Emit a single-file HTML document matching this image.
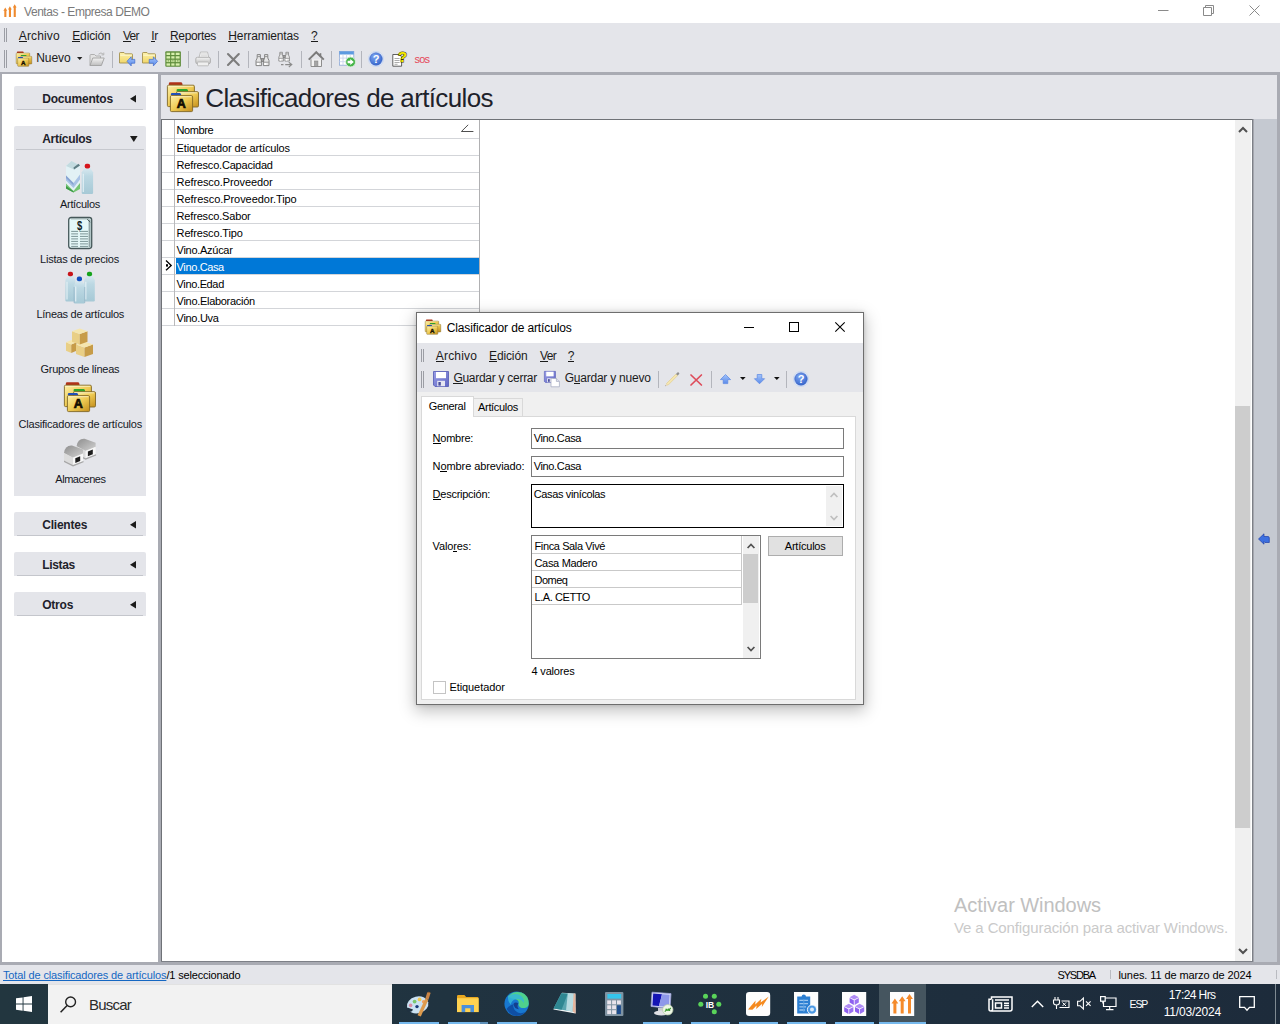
<!DOCTYPE html>
<html lang="es">
<head>
<meta charset="utf-8">
<title>Ventas - Empresa DEMO</title>
<style>
html,body{margin:0;padding:0;}
body{width:1280px;height:1024px;overflow:hidden;position:relative;background:#e4e5ea;font-family:"Liberation Sans",sans-serif;font-size:11px;color:#000;}
.a{position:absolute;}
.x{position:absolute;white-space:nowrap;}
u{text-decoration:underline;text-underline-offset:1px;text-decoration-thickness:1px;}
svg{position:absolute;overflow:visible;}
</style>
</head>
<body>
<svg width="0" height="0" style="left:0;top:0"><defs>
<linearGradient id="gF" x1="0" y1="0" x2="1" y2="1"><stop offset="0" stop-color="#fdf0a8"/><stop offset="0.5" stop-color="#efcb54"/><stop offset="1" stop-color="#c48e1c"/></linearGradient>
<linearGradient id="gY" x1="0" y1="0" x2="0" y2="1"><stop offset="0" stop-color="#fdf2a8"/><stop offset="1" stop-color="#f1d668"/></linearGradient>
<linearGradient id="gB" x1="0" y1="0" x2="0" y2="1"><stop offset="0" stop-color="#a3c4fb"/><stop offset="1" stop-color="#5b8bea"/></linearGradient>
<radialGradient id="gH" cx="0.4" cy="0.3" r="0.8"><stop offset="0" stop-color="#7ea6f2"/><stop offset="1" stop-color="#2f5fc8"/></radialGradient>
<linearGradient id="gS" x1="0" y1="0" x2="1" y2="1"><stop offset="0" stop-color="#9a9fe6"/><stop offset="1" stop-color="#6066c4"/></linearGradient>
<linearGradient id="gG" x1="0" y1="0" x2="0" y2="1"><stop offset="0" stop-color="#f4f4f4"/><stop offset="1" stop-color="#bdbdbd"/></linearGradient>
<linearGradient id="gBx" x1="0" y1="0" x2="1" y2="1"><stop offset="0" stop-color="#f6e7a8"/><stop offset="0.5" stop-color="#e2c06a"/><stop offset="1" stop-color="#bf943c"/></linearGradient>
<linearGradient id="gBt" x1="0" y1="0" x2="0" y2="1"><stop offset="0" stop-color="#dcebf2"/><stop offset="0.35" stop-color="#bcd8e3"/><stop offset="1" stop-color="#a6c9d6"/></linearGradient>
<linearGradient id="gR" x1="0" y1="0" x2="1" y2="1"><stop offset="0" stop-color="#8e8e8e"/><stop offset="1" stop-color="#d2d2d2"/></linearGradient>
</defs></svg>
<div class="a" style="left:0px;top:0px;width:1280px;height:23px;background:#fff;"></div>
<svg style="left:0px;top:0px" width="20" height="20" viewBox="0 0 20 20"><g fill="#ef8a2e"><rect x="4.3" y="10.1" width="2.1" height="6.9"/><path d="M3.4 10.7L5.3 7.5L7.199999999999999 10.7Z"/><rect x="8.9" y="8.8" width="2.1" height="8.2"/><path d="M8.0 9.4L9.9 6.2L11.8 9.4Z"/><rect x="13.7" y="6.9" width="2.1" height="10.1"/><path d="M12.799999999999999 7.5L14.7 4.3L16.599999999999998 7.5Z"/></g></svg>
<div class="x" style="left:24px;top:3.84px;font-size:12px;line-height:16px;color:#7a7a7a;letter-spacing:-0.444px;">Ventas - Empresa DEMO</div>
<svg style="left:1158px;top:10px" width="11" height="2" viewBox="0 0 11 2"><path d="M0 0.5H10.5" stroke="#8a8a8a" stroke-width="1"/></svg>
<svg style="left:1203px;top:5px" width="11" height="11" viewBox="0 0 11 11"><path d="M2.5 2.5V0.5H10.5V8.5H8.5M0.5 2.5H8.5V10.5H0.5Z" fill="none" stroke="#8a8a8a" stroke-width="1"/></svg>
<svg style="left:1249px;top:5px" width="11" height="11" viewBox="0 0 11 11"><path d="M0.5 0.5L10.5 10.5M10.5 0.5L0.5 10.5" fill="none" stroke="#8a8a8a" stroke-width="1"/></svg>
<div class="a" style="left:0px;top:23px;width:1280px;height:49px;background:#e4e5ea;"></div>
<div class="a" style="left:4px;top:28px;width:1px;height:14px;background:#9b9da4;"></div>
<div class="a" style="left:6px;top:28px;width:1px;height:14px;background:#9b9da4;"></div>
<div class="a" style="left:4px;top:50px;width:1px;height:18px;background:#9b9da4;"></div>
<div class="a" style="left:6px;top:50px;width:1px;height:18px;background:#9b9da4;"></div>
<div class="x" style="left:18.75px;top:27.84px;font-size:12px;line-height:16px;color:#1b1b1b;letter-spacing:0.141px;">Archivo</div><div class="a" style="left:18.75px;top:41px;width:8.02px;height:1px;background:#1b1b1b"></div>
<div class="x" style="left:72.25px;top:27.84px;font-size:12px;line-height:16px;color:#1b1b1b;letter-spacing:-0.137px;">Edición</div><div class="a" style="left:72.25px;top:41px;width:8.02px;height:1px;background:#1b1b1b"></div>
<div class="x" style="left:123px;top:27.84px;font-size:12px;line-height:16px;color:#1b1b1b;letter-spacing:-0.755px;">Ver</div><div class="a" style="left:123.00px;top:41px;width:8.02px;height:1px;background:#1b1b1b"></div>
<div class="x" style="left:151.25px;top:27.84px;font-size:12px;line-height:16px;color:#1b1b1b;letter-spacing:-0.297px;">Ir</div><div class="a" style="left:151.25px;top:41px;width:3.34px;height:1px;background:#1b1b1b"></div>
<div class="x" style="left:170px;top:27.84px;font-size:12px;line-height:16px;color:#1b1b1b;letter-spacing:-0.338px;">Reportes</div><div class="a" style="left:170.00px;top:41px;width:8.67px;height:1px;background:#1b1b1b"></div>
<div class="x" style="left:228.3px;top:27.84px;font-size:12px;line-height:16px;color:#1b1b1b;letter-spacing:-0.111px;">Herramientas</div><div class="a" style="left:228.30px;top:41px;width:8.67px;height:1px;background:#1b1b1b"></div>
<div class="x" style="left:311px;top:27.84px;font-size:12px;line-height:16px;color:#1b1b1b;letter-spacing:-1.200px;">?</div><div class="a" style="left:311.00px;top:41px;width:6.69px;height:1px;background:#1b1b1b"></div>
<div class="x" style="left:36.25px;top:49.84px;font-size:12px;line-height:16px;color:#1b1b1b;letter-spacing:-0.058px;">Nuevo</div>
<svg style="left:77px;top:57px" width="6" height="4" viewBox="0 0 6 4"><path d="M0 0H5.4L2.7 3Z" fill="#222"/></svg>
<div class="a" style="left:112px;top:51px;width:1px;height:17px;background:#b3b5bc;"></div>
<div class="a" style="left:188px;top:51px;width:1px;height:17px;background:#b3b5bc;"></div>
<div class="a" style="left:218px;top:51px;width:1px;height:17px;background:#b3b5bc;"></div>
<div class="a" style="left:248px;top:51px;width:1px;height:17px;background:#b3b5bc;"></div>
<div class="a" style="left:301px;top:51px;width:1px;height:17px;background:#b3b5bc;"></div>
<div class="a" style="left:331px;top:51px;width:1px;height:17px;background:#b3b5bc;"></div>
<div class="a" style="left:361px;top:51px;width:1px;height:17px;background:#b3b5bc;"></div>
<svg style="left:16px;top:51px" width="16" height="16" viewBox="0 0 16 16"><g transform="scale(0.5)"><path d="M1.9 4.2V2.2Q1.9 1.2 3.0999999999999996 1.2H14.0Q15.5 1.2 15.5 4.2Z" fill="#b03218"/><rect x="0.4" y="4.2" width="27" height="21.4" rx="1.2" fill="url(#gF)" stroke="#7f6626" stroke-width="0.9"/><path d="M1.4 5.300000000000001H26.2" stroke="#fff9d8" stroke-width="0.8" opacity="0.9"/><path d="M9.6 10.7V9.1Q9.6 8.1 10.799999999999999 8.1H19.7Q21.2 8.1 21.2 10.7Z" fill="#2fa52a"/><rect x="9.5" y="10.7" width="22" height="15.3" rx="1.2" fill="url(#gF)" stroke="#7f6626" stroke-width="0.9"/><path d="M10.5 11.799999999999999H30.3" stroke="#fff9d8" stroke-width="0.8" opacity="0.9"/><path d="M3.9 14.6V12.9Q3.9 11.9 5.1 11.9H12.8Q14.3 11.9 14.3 14.6Z" fill="#1f4fb8"/><rect x="3.4" y="14.6" width="22.2" height="16" rx="1.2" fill="url(#gF)" stroke="#7f6626" stroke-width="0.9"/><path d="M4.4 15.7H24.4" stroke="#fff9d8" stroke-width="0.8" opacity="0.9"/><text x="14.3" y="27" text-anchor="middle" font-family="Liberation Sans, sans-serif" font-weight="bold" font-size="12.5" fill="#120c00" stroke="#120c00" stroke-width="0.7">A</text></g></svg>
<svg style="left:89px;top:51px" width="16" height="16" viewBox="0 0 16 16"><path d="M1 14.5V4.5Q1 3.5 2 3.5H5.5L7 5H11.5V7" fill="#e3e3e3" stroke="#a9a9a9" stroke-width="0.9"/><path d="M1 14.5L3.8 7H15.2L12.4 14.5Z" fill="url(#gG)" stroke="#a0a0a0" stroke-width="0.9"/><path d="M9.5 3.2Q12 0.6 14.3 3.2" fill="none" stroke="#b5b5b5" stroke-width="1"/><path d="M14.8 1.6V3.9H12.5" fill="none" stroke="#b5b5b5" stroke-width="1"/></svg>
<svg style="left:119px;top:51px" width="16" height="16" viewBox="0 0 16 16"><path d="M0.5 12V2.2Q0.5 1.5 1.2 1.5H5L6.3 2.8H12.8Q13.5 2.8 13.5 3.5V12Z" fill="url(#gY)" stroke="#a4914e" stroke-width="0.9"/><path d="M1.2 4.2H12.8" stroke="#fffbe0" stroke-width="0.8"/><path d="M8 10.3L12.2 5.8V8.4H15.8V12.2H12.2V14.9Z" fill="url(#gB)" stroke="#3f6ad0" stroke-width="0.7"/></svg>
<svg style="left:142px;top:51px" width="16" height="16" viewBox="0 0 16 16"><path d="M0.5 12V2.2Q0.5 1.5 1.2 1.5H5L6.3 2.8H12.8Q13.5 2.8 13.5 3.5V12Z" fill="url(#gY)" stroke="#a4914e" stroke-width="0.9"/><path d="M1.2 4.2H12.8" stroke="#fffbe0" stroke-width="0.8"/><path d="M15.6 10.3L11.4 5.8V8.4H7.2V12.2H11.4V14.9Z" fill="url(#gB)" stroke="#3f6ad0" stroke-width="0.7"/></svg>
<svg style="left:165px;top:51px" width="16" height="16" viewBox="0 0 16 16"><rect x="0.3" y="0.3" width="15.6" height="15.4" rx="1" fill="#5f8d3c"/><rect x="1.5" y="1.70" width="3.6" height="2.3" fill="#d7efad"/><rect x="6.3" y="1.70" width="3.2" height="2.3" fill="#d7efad"/><rect x="10.7" y="1.70" width="3.9" height="2.3" fill="#d7efad"/><rect x="1.5" y="5.25" width="3.6" height="2.3" fill="#d7efad"/><rect x="6.3" y="5.25" width="3.2" height="2.3" fill="#d7efad"/><rect x="10.7" y="5.25" width="3.9" height="2.3" fill="#d7efad"/><rect x="1.5" y="8.80" width="3.6" height="2.3" fill="#d7efad"/><rect x="6.3" y="8.80" width="3.2" height="2.3" fill="#d7efad"/><rect x="10.7" y="8.80" width="3.9" height="2.3" fill="#d7efad"/><rect x="1.5" y="12.35" width="3.6" height="2.3" fill="#d7efad"/><rect x="6.3" y="12.35" width="3.2" height="2.3" fill="#d7efad"/><rect x="10.7" y="12.35" width="3.9" height="2.3" fill="#d7efad"/><rect x="2.6" y="9.4" width="1.6" height="1" fill="#5f8d3c"/><rect x="7.2" y="9.4" width="1.4" height="1" fill="#5f8d3c"/><rect x="11.8" y="9.4" width="1.8" height="1" fill="#5f8d3c"/></svg>
<svg style="left:195px;top:51px" width="16" height="16" viewBox="0 0 16 16"><path d="M4 6.5L5.5 1H12.5L13.8 6.5" fill="#f4f4f4" stroke="#b9b9b9" stroke-width="0.9"/><path d="M6 3H12M5.7 4.8H12.4" stroke="#cfcfcf" stroke-width="0.8"/><rect x="0.8" y="6.3" width="14.6" height="6.4" rx="1.6" fill="url(#gG)" stroke="#ababab" stroke-width="0.9"/><rect x="2.5" y="11" width="11" height="3.8" rx="0.8" fill="#efefef" stroke="#b4b4b4" stroke-width="0.8"/></svg>
<svg style="left:227px;top:53px" width="13" height="13" viewBox="0 0 13 13"><path d="M1 1L11.8 12M11.8 1L1 12" stroke="#7d7d7d" stroke-width="2.1" stroke-linecap="round"/></svg>
<svg style="left:255px;top:52.5px" width="15" height="14" viewBox="0 0 15 14"><g fill="#e6e6e6" stroke="#7c7c7c" stroke-width="0.9"><path d="M1 12.6V7.6L2.2 5V1.6H5.4V5L6.6 7.6V12.6Z"/><path d="M8.4 12.6V7.6L9.6 5V1.6H12.8V5L14 7.6V12.6Z"/><rect x="6.3" y="5.6" width="2.4" height="2.8" fill="#a5a5a5"/></g><path d="M1.2 9.2H6.4M8.6 9.2H13.8M2.3 3.6H5.3M9.7 3.6H12.7" stroke="#8d8d8d" stroke-width="0.9"/><rect x="2" y="10" width="2" height="2" fill="#fff"/><rect x="9.4" y="10" width="2" height="2" fill="#fff"/></svg>
<svg style="left:278px;top:50.5px" width="15" height="16" viewBox="0 0 15 16"><g transform="scale(0.82,0.8)"><g fill="#e6e6e6" stroke="#7c7c7c" stroke-width="0.9"><path d="M1 12.6V7.6L2.2 5V1.6H5.4V5L6.6 7.6V12.6Z"/><path d="M8.4 12.6V7.6L9.6 5V1.6H12.8V5L14 7.6V12.6Z"/><rect x="6.3" y="5.6" width="2.4" height="2.8" fill="#a5a5a5"/></g><path d="M1.2 9.2H6.4M8.6 9.2H13.8M2.3 3.6H5.3M9.7 3.6H12.7" stroke="#8d8d8d" stroke-width="0.9"/><rect x="2" y="10" width="2" height="2" fill="#fff"/><rect x="9.4" y="10" width="2" height="2" fill="#fff"/></g><path d="M3 13.6H5.5M7.2 13.6H13.4M10.8 11.2L13.8 13.6L10.8 16" fill="none" stroke="#8b8b8b" stroke-width="1.1"/></svg>
<svg style="left:308px;top:50.5px" width="16.5" height="16.5" viewBox="0 0 16.5 16.5"><path d="M3 8.3V15.5H13.5V8.3" fill="#f1f1f1" stroke="#8d8d8d" stroke-width="1"/><rect x="6.6" y="10" width="3.3" height="5.4" fill="#a5a5a5" stroke="#858585" stroke-width="0.6"/><path d="M0.7 8.6L8.25 1.2L15.8 8.6" fill="none" stroke="#7b7b7b" stroke-width="2"/><rect x="11.6" y="2.2" width="1.7" height="3.4" fill="#7b7b7b"/></svg>
<svg style="left:338.5px;top:51px" width="17" height="16" viewBox="0 0 17 16"><rect x="0.4" y="0.4" width="14.4" height="13.8" fill="#fff" stroke="#8aa7d6" stroke-width="0.8"/><rect x="0.4" y="0.4" width="14.4" height="3.1" fill="#5d9be0"/><path d="M4.0 3.5V14.2" stroke="#c6d2ea" stroke-width="0.8"/><path d="M7.6000000000000005 3.5V14.2" stroke="#c6d2ea" stroke-width="0.8"/><path d="M11.200000000000001 3.5V14.2" stroke="#c6d2ea" stroke-width="0.8"/><path d="M0.4 7.1H14.8" stroke="#c6d2ea" stroke-width="0.8"/><path d="M0.4 10.7H14.8" stroke="#c6d2ea" stroke-width="0.8"/><circle cx="11.6" cy="11" r="4.9" fill="#46b44a" stroke="#dff3df" stroke-width="0.8"/><path d="M8.6 9.8H11.3V7.9L14.8 11L11.3 14.1V12.2H8.6Z" fill="#fff"/></svg>
<svg style="left:368px;top:51px" width="16" height="16" viewBox="0 0 16 16"><circle cx="8" cy="8" r="7.6" fill="#e9f1fd" stroke="#b9cdf0" stroke-width="0.6"/><circle cx="8" cy="8" r="6.3" fill="url(#gH)" stroke="#3a62c0" stroke-width="0.6"/><text x="8" y="12" text-anchor="middle" font-family="Liberation Sans, sans-serif" font-weight="bold" font-size="11" fill="#fff">?</text></svg>
<svg style="left:392px;top:50px" width="16" height="17" viewBox="0 0 16 17"><path d="M0.8 4.5H7.2L9.6 6.8V16.2H0.8Z" fill="#fff" stroke="#4e4e4e" stroke-width="0.9"/><path d="M2.5 8.5H7.6M2.5 10.5H7.6M2.5 12.5H7.6M2.5 14.3H5.6" stroke="#8a8a8a" stroke-width="0.7"/><text x="10.6" y="12.3" text-anchor="middle" font-family="Liberation Sans, sans-serif" font-weight="bold" font-size="15" fill="#f4ea00" stroke="#3f3a00" stroke-width="1.1" paint-order="stroke">?</text></svg>
<div class="x" style="left:414.6px;top:51.79px;font-size:11px;line-height:14px;color:#e4485a;letter-spacing:-0.842px;">sos</div>
<div class="a" style="left:0px;top:72px;width:1280px;height:3px;background:#a9abb3;"></div>
<div class="a" style="left:0px;top:75px;width:2px;height:890px;background:#a9abb3;"></div>
<div class="a" style="left:2px;top:74px;width:156px;height:888px;background:#fff;"></div>
<div class="a" style="left:158px;top:75px;width:3px;height:890px;background:#a9abb3;"></div>
<div class="a" style="left:14px;top:86px;width:132px;height:24px;background:#e4e5ea;border-radius:2px 2px 0 0;"></div>
<div class="a" style="left:17px;top:109px;width:126px;height:1px;background:#c4c6cc;"></div>
<div class="x" style="left:42.2px;top:90.84px;font-size:12px;line-height:16px;color:#1e222b;font-weight:700;letter-spacing:-0.189px;">Documentos</div>
<svg style="left:130px;top:95px" width="6" height="8" viewBox="0 0 6 8"><path d="M6 0V7.6L0 3.8Z" fill="#1b1b1b"/></svg>
<div class="a" style="left:14px;top:126px;width:132px;height:370px;background:#e4e5ea;border-radius:2px 2px 0 0;"></div>
<div class="a" style="left:16px;top:149px;width:128px;height:1px;background:#c6c8ce;"></div>
<div class="x" style="left:42.2px;top:130.84px;font-size:12px;line-height:16px;color:#1e222b;font-weight:700;letter-spacing:-0.280px;">Artículos</div>
<svg style="left:130px;top:136px" width="8" height="6" viewBox="0 0 8 6"><path d="M0 0H7.6L3.8 6Z" fill="#1b1b1b"/></svg>
<div class="a" style="left:14px;top:512px;width:132px;height:24px;background:#e4e5ea;border-radius:2px 2px 0 0;"></div>
<div class="a" style="left:17px;top:535px;width:126px;height:1px;background:#c4c6cc;"></div>
<div class="x" style="left:42.2px;top:516.84px;font-size:12px;line-height:16px;color:#1e222b;font-weight:700;letter-spacing:-0.211px;">Clientes</div>
<svg style="left:130px;top:521px" width="6" height="8" viewBox="0 0 6 8"><path d="M6 0V7.6L0 3.8Z" fill="#1b1b1b"/></svg>
<div class="a" style="left:14px;top:552px;width:132px;height:24px;background:#e4e5ea;border-radius:2px 2px 0 0;"></div>
<div class="a" style="left:17px;top:575px;width:126px;height:1px;background:#c4c6cc;"></div>
<div class="x" style="left:42.2px;top:556.84px;font-size:12px;line-height:16px;color:#1e222b;font-weight:700;letter-spacing:-0.315px;">Listas</div>
<svg style="left:130px;top:561px" width="6" height="8" viewBox="0 0 6 8"><path d="M6 0V7.6L0 3.8Z" fill="#1b1b1b"/></svg>
<div class="a" style="left:14px;top:592px;width:132px;height:24px;background:#e4e5ea;border-radius:2px 2px 0 0;"></div>
<div class="a" style="left:17px;top:615px;width:126px;height:1px;background:#c4c6cc;"></div>
<div class="x" style="left:42.2px;top:596.84px;font-size:12px;line-height:16px;color:#1e222b;font-weight:700;letter-spacing:-0.223px;">Otros</div>
<svg style="left:130px;top:601px" width="6" height="8" viewBox="0 0 6 8"><path d="M6 0V7.6L0 3.8Z" fill="#1b1b1b"/></svg>
<div class="x" style="left:60px;top:197.19px;font-size:11px;line-height:14px;color:#15181f;letter-spacing:-0.311px;">Artículos</div>
<div class="x" style="left:40px;top:252.19px;font-size:11px;line-height:14px;color:#15181f;letter-spacing:-0.209px;">Listas de precios</div>
<div class="x" style="left:36.5px;top:307.19px;font-size:11px;line-height:14px;color:#15181f;letter-spacing:-0.287px;">Líneas de artículos</div>
<div class="x" style="left:40.6px;top:362.19px;font-size:11px;line-height:14px;color:#15181f;letter-spacing:-0.330px;">Grupos de líneas</div>
<div class="x" style="left:18.5px;top:417.19px;font-size:11px;line-height:14px;color:#15181f;letter-spacing:-0.201px;">Clasificadores de artículos</div>
<div class="x" style="left:55.3px;top:472.19px;font-size:11px;line-height:14px;color:#15181f;letter-spacing:-0.469px;">Almacenes</div>
<svg style="left:64px;top:160px" width="32" height="36" viewBox="0 0 32 36"><path d="M2 6L7.5 1L16 5.5V29L9.5 32L2 28Z" fill="#e2f1f5"/><path d="M2 6L7.5 1L16 5.5L10 9.5Z" fill="#c3dbe0"/><path d="M10 9.5L16 5.5L14.5 3.8L9.5 7.5Z" fill="#5e7d84"/><path d="M2 15.5L9.5 23L16 14.5V19.5L9.5 28L2 20.5Z" fill="#a9c3e6"/><path d="M2 15.5L9.5 23V25.5L2 18Z" fill="#6a86c0" opacity="0.55"/><path d="M2 23.5L9.5 31L16 23V29L9.5 32.5L2 28.5Z" fill="#74c472"/><path d="M2 26L9.5 31.2V32.5L2 28.5Z" fill="#3c9a48"/><path d="M21.5 6.6L17.7 12.200000000000001V32.8Q17.7 34 18.9 34H27.9Q29.099999999999998 34 29.099999999999998 32.8V12.200000000000001L25.299999999999997 6.6Z" fill="url(#gBt)" opacity="1"/><path d="M19.3 13.8V32" stroke="#e9f4f8" stroke-width="1.3" opacity="0.8"/><rect x="20.7" y="3.6999999999999997" width="5.4" height="4.800000000000001" rx="2" fill="#d6141c"/></svg>
<svg style="left:64px;top:216px" width="32" height="34" viewBox="0 0 32 34"><rect x="4.7" y="1.5" width="23" height="31" rx="2.4" fill="#e4f7f7" stroke="#46585a" stroke-width="1.3"/><path d="M25.6 3.5V31" stroke="#8fa3a4" stroke-width="2"/><path d="M7 2.7H25" stroke="#9fb1b2" stroke-width="1.4"/><path d="M23.3 3.2L26.2 6.2" stroke="#46585a" stroke-width="1"/><path d="M7.2 15.4H14M16 15.4H24" stroke="#7d9596" stroke-width="1"/><path d="M7.2 17.9H14M16 17.9H24" stroke="#7d9596" stroke-width="1"/><path d="M7.2 20.4H14M16 20.4H24" stroke="#7d9596" stroke-width="1"/><path d="M7.2 22.9H14M16 22.9H24" stroke="#7d9596" stroke-width="1"/><path d="M7.2 25.4H14M16 25.4H24" stroke="#7d9596" stroke-width="1"/><path d="M7.2 27.9H14M16 27.9H24" stroke="#7d9596" stroke-width="1"/><path d="M7.2 30.4H14M16 30.4H24" stroke="#7d9596" stroke-width="1"/><text transform="translate(15.6 13.6) scale(0.82 1.05)" text-anchor="middle" font-family="Liberation Sans, sans-serif" font-weight="bold" font-size="11.5" fill="#0d1a1a">$</text></svg>
<svg style="left:64px;top:270px" width="32" height="36" viewBox="0 0 32 36"><path d="M4.5 4.5L1.4000000000000004 10.1V30.3Q1.4000000000000004 31.5 2.6000000000000005 31.5H10.200000000000001Q11.4 31.5 11.4 30.3V10.1L8.3 4.5Z" fill="url(#gBt)" opacity="1"/><path d="M3.0000000000000004 11.7V29.5" stroke="#e9f4f8" stroke-width="1.3" opacity="0.8"/><rect x="3.8000000000000003" y="1.7" width="5.2" height="4.6000000000000005" rx="2" fill="#c8141a"/><path d="M23.6 4.5L20.2 10.1V30.3Q20.2 31.5 21.4 31.5H29.6Q30.8 31.5 30.8 30.3V10.1L27.4 4.5Z" fill="url(#gBt)" opacity="1"/><path d="M21.8 11.7V29.5" stroke="#e9f4f8" stroke-width="1.3" opacity="0.8"/><rect x="22.9" y="1.7" width="5.2" height="4.6000000000000005" rx="2" fill="#16a31c"/><path d="M13.5 9.4L10.100000000000001 15.000000000000002V32.4Q10.100000000000001 33.6 11.3 33.6H19.5Q20.7 33.6 20.7 32.4V15.000000000000002L17.3 9.4Z" fill="url(#gBt)" opacity="1"/><path d="M11.700000000000001 16.6V31.6" stroke="#e9f4f8" stroke-width="1.3" opacity="0.8"/><rect x="12.8" y="6.6" width="5.2" height="4.6000000000000005" rx="2" fill="#1450c0"/><path d="M10.1 33V17M20.7 33V17" stroke="#8fb0c4" stroke-width="0.8" opacity="0.8"/></svg>
<svg style="left:64px;top:326px" width="32" height="32" viewBox="0 0 32 32"><path d="M2 16.2L7.25 18.4V27L2 24.8Z" fill="#e9cf86"/><path d="M7.25 18.4L12.5 16.2V24.8L7.25 27Z" fill="#c79c48"/><path d="M2 16.2L7.25 14L12.5 16.2L7.25 18.4Z" fill="#f5e6ae"/><path d="M12 18.5L20.5 21.5V31.0L12 28.0Z" fill="#e9cf86"/><path d="M20.5 21.5L29 18.5V28.0L20.5 31.0Z" fill="#c79c48"/><path d="M12 18.5L20.5 15.5L29 18.5L20.5 21.5Z" fill="#f5e6ae"/><path d="M8 5.3L15.75 8.1V18.5L8 15.7Z" fill="#e9cf86"/><path d="M15.75 8.1L23.5 5.3V15.7L15.75 18.5Z" fill="#c79c48"/><path d="M8 5.3L15.75 2.5L23.5 5.3L15.75 8.1Z" fill="#f5e6ae"/></svg>
<svg style="left:64px;top:381px" width="32" height="32" viewBox="0 0 32 32"><g transform="scale(1.0)"><path d="M1.9 4.2V2.2Q1.9 1.2 3.0999999999999996 1.2H14.0Q15.5 1.2 15.5 4.2Z" fill="#b03218"/><rect x="0.4" y="4.2" width="27" height="21.4" rx="1.2" fill="url(#gF)" stroke="#7f6626" stroke-width="0.9"/><path d="M1.4 5.300000000000001H26.2" stroke="#fff9d8" stroke-width="0.8" opacity="0.9"/><path d="M9.6 10.7V9.1Q9.6 8.1 10.799999999999999 8.1H19.7Q21.2 8.1 21.2 10.7Z" fill="#2fa52a"/><rect x="9.5" y="10.7" width="22" height="15.3" rx="1.2" fill="url(#gF)" stroke="#7f6626" stroke-width="0.9"/><path d="M10.5 11.799999999999999H30.3" stroke="#fff9d8" stroke-width="0.8" opacity="0.9"/><path d="M3.9 14.6V12.9Q3.9 11.9 5.1 11.9H12.8Q14.3 11.9 14.3 14.6Z" fill="#1f4fb8"/><rect x="3.4" y="14.6" width="22.2" height="16" rx="1.2" fill="url(#gF)" stroke="#7f6626" stroke-width="0.9"/><path d="M4.4 15.7H24.4" stroke="#fff9d8" stroke-width="0.8" opacity="0.9"/><text x="14.3" y="27" text-anchor="middle" font-family="Liberation Sans, sans-serif" font-weight="bold" font-size="12.5" fill="#120c00" stroke="#120c00" stroke-width="0.7">A</text></g></svg>
<svg style="left:64px;top:436px" width="32" height="32" viewBox="0 0 32 32"><path d="M12.6 10.2Q13.6 2.2 20.6 2.7L31.6 6.7V11.2L21.6 15.2Z" fill="url(#gR)"/><path d="M12.6 10.2L21.6 14.7V22.2L12.6 17.7Z" fill="#dcdcdc"/><path d="M21.6 14.7L31.6 10.7V18.2L21.6 22.2Z" fill="#f7f7f7"/><path d="M23.9 15.399999999999999L28.799999999999997 13.5V18.2L23.9 20.2Z" fill="#1d1d1d"/><path d="M12.6 17.7L21.6 22.2L32.1 18.2V19.5L21.6 23.7L12.6 19.2Z" fill="#a7a7a7"/><path d="M0 17Q1 9 8 9.5L19 13.5V18L9 22Z" fill="url(#gR)"/><path d="M0 17L9 21.5V29L0 24.5Z" fill="#dcdcdc"/><path d="M9 21.5L19 17.5V25L9 29Z" fill="#f7f7f7"/><path d="M11.3 22.2L16.2 20.3V25L11.3 27Z" fill="#1d1d1d"/><path d="M0 24.5L9 29L19.5 25V26.3L9 30.5L0 26Z" fill="#a7a7a7"/></svg>
<div class="a" style="left:161px;top:75px;width:1116px;height:44px;background:#e4e5ea;"></div>
<svg style="left:167px;top:81px" width="32" height="32" viewBox="0 0 32 32"><g transform="scale(1.0)"><path d="M1.9 4.2V2.2Q1.9 1.2 3.0999999999999996 1.2H14.0Q15.5 1.2 15.5 4.2Z" fill="#b03218"/><rect x="0.4" y="4.2" width="27" height="21.4" rx="1.2" fill="url(#gF)" stroke="#7f6626" stroke-width="0.9"/><path d="M1.4 5.300000000000001H26.2" stroke="#fff9d8" stroke-width="0.8" opacity="0.9"/><path d="M9.6 10.7V9.1Q9.6 8.1 10.799999999999999 8.1H19.7Q21.2 8.1 21.2 10.7Z" fill="#2fa52a"/><rect x="9.5" y="10.7" width="22" height="15.3" rx="1.2" fill="url(#gF)" stroke="#7f6626" stroke-width="0.9"/><path d="M10.5 11.799999999999999H30.3" stroke="#fff9d8" stroke-width="0.8" opacity="0.9"/><path d="M3.9 14.6V12.9Q3.9 11.9 5.1 11.9H12.8Q14.3 11.9 14.3 14.6Z" fill="#1f4fb8"/><rect x="3.4" y="14.6" width="22.2" height="16" rx="1.2" fill="url(#gF)" stroke="#7f6626" stroke-width="0.9"/><path d="M4.4 15.7H24.4" stroke="#fff9d8" stroke-width="0.8" opacity="0.9"/><text x="14.3" y="27" text-anchor="middle" font-family="Liberation Sans, sans-serif" font-weight="bold" font-size="12.5" fill="#120c00" stroke="#120c00" stroke-width="0.7">A</text></g></svg>
<div class="x" style="left:205.3px;top:81.49px;font-size:26px;line-height:34px;color:#1e222b;letter-spacing:-0.645px;">Clasificadores de artículos</div>
<div class="a" style="left:161px;top:119px;width:1092px;height:843px;background:#fff;"></div>
<div class="a" style="left:161px;top:119px;width:1092px;height:1px;background:#6f7277;"></div>
<div class="a" style="left:161px;top:119px;width:1px;height:843px;background:#6f7277;"></div>
<div class="a" style="left:162px;top:138px;width:318px;height:1px;background:#d3d5d9;"></div>
<div class="x" style="left:176.6px;top:123.19px;font-size:11px;line-height:14px;color:#000;letter-spacing:-0.421px;">Nombre</div>
<div class="a" style="left:162px;top:155px;width:318px;height:1px;background:#d3d5d9;"></div>
<div class="x" style="left:176.6px;top:140.69px;font-size:11px;line-height:14px;color:#000;letter-spacing:-0.116px;">Etiquetador de artículos</div>
<div class="a" style="left:162px;top:172px;width:318px;height:1px;background:#d3d5d9;"></div>
<div class="x" style="left:176.6px;top:157.69px;font-size:11px;line-height:14px;color:#000;letter-spacing:-0.193px;">Refresco.Capacidad</div>
<div class="a" style="left:162px;top:189px;width:318px;height:1px;background:#d3d5d9;"></div>
<div class="x" style="left:176.6px;top:174.69px;font-size:11px;line-height:14px;color:#000;letter-spacing:-0.107px;">Refresco.Proveedor</div>
<div class="a" style="left:162px;top:206px;width:318px;height:1px;background:#d3d5d9;"></div>
<div class="x" style="left:176.6px;top:191.69px;font-size:11px;line-height:14px;color:#000;letter-spacing:-0.051px;">Refresco.Proveedor.Tipo</div>
<div class="a" style="left:162px;top:223px;width:318px;height:1px;background:#d3d5d9;"></div>
<div class="x" style="left:176.6px;top:208.69px;font-size:11px;line-height:14px;color:#000;letter-spacing:-0.174px;">Refresco.Sabor</div>
<div class="a" style="left:162px;top:240px;width:318px;height:1px;background:#d3d5d9;"></div>
<div class="x" style="left:176.6px;top:225.69px;font-size:11px;line-height:14px;color:#000;letter-spacing:-0.151px;">Refresco.Tipo</div>
<div class="a" style="left:162px;top:257px;width:318px;height:1px;background:#d3d5d9;"></div>
<div class="x" style="left:176.6px;top:242.69px;font-size:11px;line-height:14px;color:#000;letter-spacing:-0.283px;">Vino.Azúcar</div>
<div class="a" style="left:162px;top:274px;width:318px;height:1px;background:#d3d5d9;"></div>
<div class="a" style="left:176px;top:258px;width:303px;height:16px;background:#0078d7;"></div>
<div class="x" style="left:176.6px;top:259.69px;font-size:11px;line-height:14px;color:#fff;letter-spacing:-0.363px;">Vino.Casa</div>
<div class="a" style="left:162px;top:291px;width:318px;height:1px;background:#d3d5d9;"></div>
<div class="x" style="left:176.6px;top:276.69px;font-size:11px;line-height:14px;color:#000;letter-spacing:-0.364px;">Vino.Edad</div>
<div class="a" style="left:162px;top:308px;width:318px;height:1px;background:#d3d5d9;"></div>
<div class="x" style="left:176.6px;top:293.69px;font-size:11px;line-height:14px;color:#000;letter-spacing:-0.298px;">Vino.Elaboración</div>
<div class="a" style="left:162px;top:325px;width:318px;height:1px;background:#d3d5d9;"></div>
<div class="x" style="left:176.6px;top:310.69px;font-size:11px;line-height:14px;color:#000;letter-spacing:-0.317px;">Vino.Uva</div>
<div class="a" style="left:174px;top:120px;width:1px;height:206px;background:#b9b9bb;"></div>
<div class="a" style="left:479px;top:120px;width:1px;height:206px;background:#b0b0b2;"></div>
<svg style="left:460px;top:124px" width="14" height="8" viewBox="0 0 14 8"><path d="M8.2 0.8L1.4 7.5H13.4" fill="none" stroke="#4f4f4f" stroke-width="1"/></svg>
<svg style="left:165px;top:260px" width="8" height="11" viewBox="0 0 8 11"><path d="M1 0.6L6.2 5.4L1 10.2" fill="none" stroke="#000" stroke-width="1.3"/><rect x="1" y="4.2" width="2" height="2.4" fill="#000"/></svg>
<div class="a" style="left:1235px;top:120px;width:16px;height:841px;background:#f0f0f0;"></div>
<div class="a" style="left:1235px;top:406px;width:15px;height:422px;background:#cdcdcd;"></div>
<svg style="left:1238px;top:126px" width="10" height="7" viewBox="0 0 10 7"><path d="M1 6L5 2L9 6" fill="none" stroke="#505050" stroke-width="2"/></svg>
<svg style="left:1238px;top:948px" width="10" height="7" viewBox="0 0 10 7"><path d="M1 1L5 5L9 1" fill="none" stroke="#505050" stroke-width="2"/></svg>
<div class="a" style="left:1252px;top:119px;width:1px;height:843px;background:#7d8087;"></div>
<div class="a" style="left:161px;top:961px;width:1092px;height:1px;background:#7d8087;"></div>
<div class="a" style="left:1253px;top:119px;width:24px;height:843px;background:#c5c9d1;"></div>
<div class="a" style="left:1253px;top:119px;width:1px;height:843px;background:#a4a6ae;"></div>
<div class="a" style="left:1277px;top:75px;width:3px;height:890px;background:#a9abb3;"></div>
<div class="a" style="left:0px;top:962px;width:1280px;height:3px;background:#a9abb3;"></div>
<svg style="left:1258px;top:533px" width="12" height="12" viewBox="0 0 12 12"><path d="M0.5 6L6 0.8V3.5H10Q11.3 3.5 11.3 5V9.5H7L6 8.5V11.2Z" fill="#3c6fe0" stroke="#1f3fa8" stroke-width="0.7"/></svg>
<div class="x" style="left:954px;top:892.07px;font-size:20px;line-height:26px;color:#c0c0c0;letter-spacing:-0.054px;">Activar Windows</div>
<div class="x" style="left:954px;top:917.80px;font-size:15px;line-height:20px;color:#cacaca;letter-spacing:-0.112px;">Ve a Configuración para activar Windows.</div>
<div class="a" style="left:416px;top:312px;width:448px;height:393px;background:#f0f0f0;box-shadow:0 5px 15px 1px rgba(0,0,0,0.25),0 0 4px rgba(0,0,0,0.16);"></div>
<div class="a" style="left:416px;top:312px;width:448px;height:393px;border:1px solid #6e6e6e;box-sizing:border-box;"></div>
<div class="a" style="left:417px;top:313px;width:446px;height:30px;background:#fff;"></div>
<div class="a" style="left:417px;top:343px;width:446px;height:49px;background:#e4e5ea;"></div>
<svg style="left:425px;top:319px" width="16" height="16" viewBox="0 0 16 16"><g transform="scale(0.5)"><path d="M1.9 4.2V2.2Q1.9 1.2 3.0999999999999996 1.2H14.0Q15.5 1.2 15.5 4.2Z" fill="#b03218"/><rect x="0.4" y="4.2" width="27" height="21.4" rx="1.2" fill="url(#gF)" stroke="#7f6626" stroke-width="0.9"/><path d="M1.4 5.300000000000001H26.2" stroke="#fff9d8" stroke-width="0.8" opacity="0.9"/><path d="M9.6 10.7V9.1Q9.6 8.1 10.799999999999999 8.1H19.7Q21.2 8.1 21.2 10.7Z" fill="#2fa52a"/><rect x="9.5" y="10.7" width="22" height="15.3" rx="1.2" fill="url(#gF)" stroke="#7f6626" stroke-width="0.9"/><path d="M10.5 11.799999999999999H30.3" stroke="#fff9d8" stroke-width="0.8" opacity="0.9"/><path d="M3.9 14.6V12.9Q3.9 11.9 5.1 11.9H12.8Q14.3 11.9 14.3 14.6Z" fill="#1f4fb8"/><rect x="3.4" y="14.6" width="22.2" height="16" rx="1.2" fill="url(#gF)" stroke="#7f6626" stroke-width="0.9"/><path d="M4.4 15.7H24.4" stroke="#fff9d8" stroke-width="0.8" opacity="0.9"/><text x="14.3" y="27" text-anchor="middle" font-family="Liberation Sans, sans-serif" font-weight="bold" font-size="12.5" fill="#120c00" stroke="#120c00" stroke-width="0.7">A</text></g></svg>
<div class="x" style="left:446.7px;top:319.84px;font-size:12px;line-height:16px;color:#000;letter-spacing:-0.122px;">Clasificador de artículos</div>
<svg style="left:744px;top:327px" width="10" height="1" viewBox="0 0 10 1"><rect x="0" y="0" width="10" height="1" fill="#000"/></svg>
<svg style="left:789px;top:322px" width="10" height="10" viewBox="0 0 10 10"><rect x="0.5" y="0.5" width="9" height="9" fill="none" stroke="#000" stroke-width="1"/></svg>
<svg style="left:835px;top:322px" width="10" height="10" viewBox="0 0 10 10"><path d="M0.3 0.3L9.7 9.7M9.7 0.3L0.3 9.7" fill="none" stroke="#000" stroke-width="1.1"/></svg>
<div class="a" style="left:421px;top:349px;width:1px;height:13px;background:#9b9da4;"></div>
<div class="a" style="left:423px;top:349px;width:1px;height:13px;background:#9b9da4;"></div>
<div class="a" style="left:421px;top:371px;width:1px;height:17px;background:#9b9da4;"></div>
<div class="a" style="left:423px;top:371px;width:1px;height:17px;background:#9b9da4;"></div>
<div class="x" style="left:435.8px;top:347.84px;font-size:12px;line-height:16px;color:#1b1b1b;letter-spacing:0.169px;">Archivo</div><div class="a" style="left:435.80px;top:361px;width:8.02px;height:1px;background:#1b1b1b"></div>
<div class="x" style="left:489px;top:347.84px;font-size:12px;line-height:16px;color:#1b1b1b;letter-spacing:-0.123px;">Edición</div><div class="a" style="left:489.00px;top:361px;width:8.02px;height:1px;background:#1b1b1b"></div>
<div class="x" style="left:540px;top:347.84px;font-size:12px;line-height:16px;color:#1b1b1b;letter-spacing:-0.672px;">Ver</div><div class="a" style="left:540.00px;top:361px;width:8.02px;height:1px;background:#1b1b1b"></div>
<div class="x" style="left:567.8px;top:347.84px;font-size:12px;line-height:16px;color:#1b1b1b;letter-spacing:-1.200px;">?</div><div class="a" style="left:567.80px;top:361px;width:6.69px;height:1px;background:#1b1b1b"></div>
<div class="x" style="left:453.4px;top:370.04px;font-size:12px;line-height:16px;color:#1b1b1b;letter-spacing:-0.277px;">Guardar y cerrar</div><div class="a" style="left:453.40px;top:383px;width:9.34px;height:1px;background:#1b1b1b"></div>
<div class="x" style="left:564.7px;top:370.04px;font-size:12px;line-height:16px;color:#1b1b1b;letter-spacing:-0.226px;">Guardar y nuevo</div><div class="a" style="left:573.82px;top:383px;width:6.67px;height:1px;background:#1b1b1b"></div>
<div class="a" style="left:658px;top:371px;width:1px;height:17px;background:#b3b5bc;"></div>
<div class="a" style="left:711px;top:371px;width:1px;height:17px;background:#b3b5bc;"></div>
<div class="a" style="left:786px;top:371px;width:1px;height:17px;background:#b3b5bc;"></div>
<svg style="left:433px;top:371px" width="16" height="16" viewBox="0 0 16 16"><g transform="scale(1)"><path d="M0.5 0.5H15.5V15.5H2L0.5 14Z" fill="url(#gS)" stroke="#5258b4" stroke-width="0.8"/><rect x="3" y="1" width="10" height="6.2" fill="#fff"/><rect x="4.2" y="9.8" width="7.8" height="5.4" fill="#e6e6f2"/><rect x="5.4" y="11" width="2.4" height="3.6" fill="#4a4f9c"/></g></svg>
<svg style="left:544px;top:371px" width="16" height="16" viewBox="0 0 16 16"><g transform="scale(0.74)"><path d="M0.5 0.5H15.5V15.5H2L0.5 14Z" fill="url(#gS)" stroke="#5258b4" stroke-width="0.8"/><rect x="3" y="1" width="10" height="6.2" fill="#fff"/><rect x="4.2" y="9.8" width="7.8" height="5.4" fill="#e6e6f2"/><rect x="5.4" y="11" width="2.4" height="3.6" fill="#4a4f9c"/></g><path d="M7 7.4H12.4L15.4 10.4V15.8H7Z" fill="#fff" stroke="#a9aec4" stroke-width="0.8"/><path d="M12.4 7.4V10.4H15.4" fill="#e4e6f0" stroke="#a9aec4" stroke-width="0.8"/></svg>
<svg style="left:664px;top:371px" width="17" height="16" viewBox="0 0 17 16"><path d="M2.4 12.6L12 3L13.6 4.6L4 14.2Z" fill="#f4e6b0" stroke="#e0c98a" stroke-width="0.6"/><path d="M12 3L13.4 1.6Q14 1 14.7 1.6L15.1 2Q15.7 2.7 15 3.3L13.6 4.6Z" fill="#8f8f8f"/><path d="M2.4 12.6L1.2 15.2L4 14.2Z" fill="#ecdcb8"/><path d="M1.2 15.2L1.6 14.2L2.3 14.8Z" fill="#777"/></svg>
<svg style="left:690px;top:373.5px" width="13" height="12" viewBox="0 0 13 12"><path d="M1 1L11.4 11M11.4 1L1 11" stroke="#de4c5b" stroke-width="1.7" stroke-linecap="round"/></svg>
<svg style="left:720px;top:373.5px" width="11" height="10" viewBox="0 0 11 10"><path d="M5.5 0.5L10.6 5.6H7.8V9.6H3.2V5.6H0.4Z" fill="url(#gB)" stroke="#5a86e2" stroke-width="0.7"/></svg>
<svg style="left:740px;top:377px" width="6" height="3" viewBox="0 0 6 3"><path d="M0 0H5.6L2.8 3Z" fill="#111"/></svg>
<svg style="left:754px;top:373.5px" width="11" height="10" viewBox="0 0 11 10"><path d="M5.5 9.8L10.6 4.7H7.8V0.5H3.2V4.7H0.4Z" fill="url(#gB)" stroke="#5a86e2" stroke-width="0.7"/></svg>
<svg style="left:773.6px;top:377px" width="6" height="3" viewBox="0 0 6 3"><path d="M0 0H5.6L2.8 3Z" fill="#111"/></svg>
<svg style="left:793px;top:371px" width="16" height="16" viewBox="0 0 16 16"><circle cx="8" cy="8" r="7.6" fill="#e9f1fd" stroke="#b9cdf0" stroke-width="0.6"/><circle cx="8" cy="8" r="6.3" fill="url(#gH)" stroke="#3a62c0" stroke-width="0.6"/><text x="8" y="12" text-anchor="middle" font-family="Liberation Sans, sans-serif" font-weight="bold" font-size="11" fill="#fff">?</text></svg>
<div class="a" style="left:421px;top:416px;width:435px;height:284px;background:#fff;border:1px solid #d9d9d9;box-sizing:border-box;"></div>
<div class="a" style="left:473px;top:398px;width:50px;height:19px;background:#f0f0f0;border:1px solid #d9d9d9;box-sizing:border-box;"></div>
<div class="a" style="left:421px;top:396px;width:53px;height:21px;background:#fff;border:1px solid #d9d9d9;border-bottom:0;box-sizing:border-box;"></div>
<div class="x" style="left:428.75px;top:398.59px;font-size:11px;line-height:14px;color:#000;letter-spacing:-0.342px;">General</div>
<div class="x" style="left:478px;top:400.44px;font-size:11px;line-height:14px;color:#000;letter-spacing:-0.311px;">Artículos</div>
<div class="x" style="left:432.6px;top:430.69px;font-size:11px;line-height:14px;color:#000;letter-spacing:-0.241px;">Nombre:</div><div class="a" style="left:432.60px;top:443px;width:7.95px;height:1px;background:#000"></div>
<div class="x" style="left:432.6px;top:458.89px;font-size:11px;line-height:14px;color:#000;letter-spacing:-0.092px;">Nombre abreviado:</div><div class="a" style="left:440.46px;top:471px;width:6.11px;height:1px;background:#000"></div>
<div class="x" style="left:432.6px;top:486.79px;font-size:11px;line-height:14px;color:#000;letter-spacing:-0.253px;">Descripción:</div><div class="a" style="left:432.60px;top:499px;width:7.95px;height:1px;background:#000"></div>
<div class="x" style="left:432.6px;top:538.69px;font-size:11px;line-height:14px;color:#000;letter-spacing:-0.131px;">Valores:</div><div class="a" style="left:453.28px;top:551px;width:3.67px;height:1px;background:#000"></div>
<div class="a" style="left:531px;top:428px;width:313px;height:21px;background:#fff;border:1px solid #7a7a7a;box-sizing:border-box;"></div>
<div class="a" style="left:531px;top:456px;width:313px;height:21px;background:#fff;border:1px solid #7a7a7a;box-sizing:border-box;"></div>
<div class="a" style="left:531px;top:484px;width:313px;height:44px;background:#fff;border:1px solid #000;box-sizing:border-box;"></div>
<div class="x" style="left:533.75px;top:430.69px;font-size:11px;line-height:14px;color:#000;letter-spacing:-0.363px;">Vino.Casa</div>
<div class="x" style="left:533.75px;top:458.89px;font-size:11px;line-height:14px;color:#000;letter-spacing:-0.363px;">Vino.Casa</div>
<div class="x" style="left:533.75px;top:486.79px;font-size:11px;line-height:14px;color:#000;letter-spacing:-0.370px;">Casas vinícolas</div>
<div class="a" style="left:826px;top:486px;width:16px;height:40px;background:#f0f0f0;"></div>
<svg style="left:829.5px;top:492px" width="8" height="6" viewBox="0 0 8 6"><path d="M0.6 5L4 1.4L7.4 5" fill="none" stroke="#bfbfbf" stroke-width="1.7"/></svg>
<svg style="left:829.5px;top:514.5px" width="8" height="6" viewBox="0 0 8 6"><path d="M0.6 1L4 4.6L7.4 1" fill="none" stroke="#bfbfbf" stroke-width="1.7"/></svg>
<div class="a" style="left:531px;top:535px;width:230px;height:124px;background:#fff;border:1px solid #7a7a7a;box-sizing:border-box;"></div>
<div class="a" style="left:532px;top:553px;width:210px;height:1px;background:#c9c9c9;"></div>
<div class="x" style="left:534.5px;top:538.89px;font-size:11px;line-height:14px;color:#000;letter-spacing:-0.382px;">Finca Sala Vivé</div>
<div class="a" style="left:532px;top:570px;width:210px;height:1px;background:#c9c9c9;"></div>
<div class="x" style="left:534.5px;top:555.89px;font-size:11px;line-height:14px;color:#000;letter-spacing:-0.322px;">Casa Madero</div>
<div class="a" style="left:532px;top:587px;width:210px;height:1px;background:#c9c9c9;"></div>
<div class="x" style="left:534.5px;top:572.89px;font-size:11px;line-height:14px;color:#000;letter-spacing:-0.494px;">Domeq</div>
<div class="a" style="left:532px;top:604px;width:210px;height:1px;background:#c9c9c9;"></div>
<div class="x" style="left:534.5px;top:589.89px;font-size:11px;line-height:14px;color:#000;letter-spacing:-0.420px;">L.A. CETTO</div>
<div class="a" style="left:741px;top:536px;width:1px;height:68px;background:#c9c9c9;"></div>
<div class="a" style="left:743px;top:536px;width:16px;height:122px;background:#f0f0f0;"></div>
<div class="a" style="left:743px;top:554px;width:15px;height:49px;background:#cdcdcd;"></div>
<svg style="left:746.5px;top:542.5px" width="8" height="6" viewBox="0 0 8 6"><path d="M0.6 5L4 1.4L7.4 5" fill="none" stroke="#505050" stroke-width="1.7"/></svg>
<svg style="left:746.5px;top:646px" width="8" height="6" viewBox="0 0 8 6"><path d="M0.6 1L4 4.6L7.4 1" fill="none" stroke="#505050" stroke-width="1.7"/></svg>
<div class="a" style="left:768px;top:536px;width:75px;height:20px;background:#e1e1e1;border:1px solid #adadad;box-sizing:border-box;"></div>
<div class="x" style="left:784.8px;top:538.89px;font-size:11px;line-height:14px;color:#000;letter-spacing:-0.233px;">Artículos</div>
<div class="x" style="left:531.5px;top:664.49px;font-size:11px;line-height:14px;color:#000;letter-spacing:-0.182px;">4 valores</div>
<div class="a" style="left:433px;top:681px;width:13px;height:13px;background:#fff;border:1px solid #c4c4c4;box-sizing:border-box;"></div>
<div class="x" style="left:449.4px;top:680.19px;font-size:11px;line-height:14px;color:#000;letter-spacing:-0.070px;">Etiquetador</div>
<div class="a" style="left:0px;top:965px;width:1280px;height:19px;background:#e4e5ea;"></div>
<div class="x" style="left:3px;top:967.59px;font-size:11px;line-height:14px;color:#1567c2;letter-spacing:-0.132px;text-decoration:underline;">Total de clasificadores de artículos</div>
<div class="x" style="left:166.4px;top:967.59px;font-size:11px;line-height:14px;color:#000;letter-spacing:-0.164px;">/1 seleccionado</div>
<div class="x" style="left:1057.5px;top:967.59px;font-size:11px;line-height:14px;color:#000;letter-spacing:-1.190px;">SYSDBA</div>
<div class="a" style="left:1110px;top:970px;width:1px;height:9px;background:#b9bbc1;"></div>
<div class="x" style="left:1118.5px;top:967.59px;font-size:11px;line-height:14px;color:#000;letter-spacing:-0.099px;">lunes. 11 de marzo de 2024</div>
<div class="a" style="left:1276px;top:970px;width:1px;height:9px;background:#b9bbc1;"></div>
<div class="a" style="left:0px;top:984px;width:1280px;height:40px;background:linear-gradient(90deg,#22363f 0%,#203340 35%,#1e2e3d 75%,#1d2b3b 100%);"></div>
<svg style="left:16px;top:996px" width="16" height="16" viewBox="0 0 16 16"><g fill="#fff"><path d="M0 2.3L6.6 1.4V7.6H0Z"/><path d="M7.5 1.25L16 0V7.6H7.5Z"/><path d="M0 8.5H6.6V14.7L0 13.8Z"/><path d="M7.5 8.5H16V16L7.5 14.8Z"/></g></svg>
<div class="a" style="left:48px;top:984px;width:344px;height:40px;background:#f2f2f2;"></div>
<div class="a" style="left:48px;top:984px;width:344px;height:1px;background:#e2e2e2;"></div>
<svg style="left:60px;top:996px" width="17" height="17" viewBox="0 0 17 17"><circle cx="10.6" cy="5.9" r="4.9" fill="none" stroke="#222" stroke-width="1.4"/><path d="M7.1 9.5L0.6 16.2" stroke="#222" stroke-width="1.5"/></svg>
<div class="x" style="left:89px;top:994.80px;font-size:15px;line-height:20px;color:#2b2b2b;letter-spacing:-0.781px;">Buscar</div>
<div class="a" style="left:399px;top:1022px;width:40px;height:2px;background:#76b9ed;"></div>
<div class="a" style="left:448px;top:1022px;width:32px;height:2px;background:#76b9ed;"></div>
<div class="a" style="left:497px;top:1022px;width:40px;height:2px;background:#76b9ed;"></div>
<div class="a" style="left:643px;top:1022px;width:39px;height:2px;background:#76b9ed;"></div>
<div class="a" style="left:691px;top:1022px;width:39px;height:2px;background:#76b9ed;"></div>
<div class="a" style="left:739px;top:1022px;width:39px;height:2px;background:#76b9ed;"></div>
<div class="a" style="left:787px;top:1022px;width:39px;height:2px;background:#76b9ed;"></div>
<div class="a" style="left:835px;top:1022px;width:39px;height:2px;background:#76b9ed;"></div>
<div class="a" style="left:480px;top:1022px;width:8px;height:2px;background:#5d8fb8;"></div>
<div class="a" style="left:879px;top:984px;width:47px;height:40px;background:#45555f;"></div>
<div class="a" style="left:879px;top:1022px;width:47px;height:2px;background:#76b9ed;"></div>
<svg style="left:404px;top:990px" width="28" height="28" viewBox="0 0 28 28"><ellipse cx="13.6" cy="14.8" rx="10.9" ry="8.4" fill="#cbe2f2" transform="rotate(-14 13.6 14.8)"/><path d="M3.4 17.4Q1.6 20 4.6 21.4Q8.2 22.4 9 19.4Z" fill="#1f3140"/><circle cx="10.6" cy="11.6" r="1.9" fill="#7cc86c"/><circle cx="15.6" cy="9.4" r="1.9" fill="#f2c84e"/><circle cx="6.6" cy="15.4" r="1.8" fill="#d98ca4"/><circle cx="19.6" cy="11.8" r="1.7" fill="#f0a060"/><circle cx="13" cy="16.6" r="1.7" fill="#1a3a78"/><path d="M13.6 25.2L21.4 8.4L24.4 9.8L16.8 26.6Z" fill="#dc9a4c"/><path d="M21.4 8.4L23.2 2.6Q24.8 1.6 26.6 3L24.4 9.8Z" fill="#c98546"/><path d="M23.2 2.6Q24.6 0.8 26.6 3Z" fill="#9a6230"/></svg>
<svg style="left:456px;top:994px" width="24" height="20" viewBox="0 0 24 20"><path d="M1 2.2Q1 1 2.2 1H8.4L10.2 3H21.4Q22.6 3 22.6 4.2V18H1Z" fill="#e9a820"/><rect x="1" y="4.2" width="21.6" height="13.9" fill="#ffd251"/><path d="M5.6 18.1V11H18V18.1H14.4V14.2H9.2V18.1Z" fill="#4a90dc"/></svg>
<svg style="left:504px;top:991px" width="26" height="26" viewBox="0 0 26 26"><circle cx="12.6" cy="12.8" r="12.2" fill="#1878d0"/><path d="M4 5.4Q9.8 -0.8 17.6 1.6Q24.8 4.4 24.8 12.8Q24.6 16.4 20.8 17Q15 17.4 14.4 13.4Q15.8 9.4 11.6 8.2Q6.6 7.4 4 5.4Z" fill="#4fd18c"/><path d="M4 5.4Q9 2 14.4 3.6Q20.6 6 20 12Q16.6 7 11.6 8.2Q7.4 9.2 6.8 13.8Q3.4 10 4 5.4Z" fill="#35b6d8" opacity="0.85"/><path d="M9.2 13.2Q8.6 18.8 13.8 21.6Q17.6 23 21.6 20.8Q18 24.8 12.6 25Q5.8 24.2 2.6 18Q5.2 14.2 9.2 13.2Z" fill="#0f4fa4"/><path d="M9.4 13Q11.4 10.4 14.4 12.4Q12.4 15.6 15 18.2Q10.4 18.2 9.4 13Z" fill="#143f8e"/></svg>
<svg style="left:552px;top:991px" width="26" height="24" viewBox="0 0 26 24"><path d="M10 1.8L23.4 2.6L23.6 22.4L1.4 18.4Z" fill="#f2f6f7"/><path d="M9.4 2.2L21.6 3L20.6 20.6L1.6 17.4Z" fill="#5aa6b0"/><path d="M9.4 2.2L15.8 2.6L9.6 18.8L1.6 17.4Z" fill="#2f8792"/><path d="M15.8 2.6L21.6 3L20.6 20.6L14 19.6Z" fill="#b7dbe1"/><path d="M21.6 3L23.4 2.6L23.6 22.4L20.6 20.6Z" fill="#e6b49c"/></svg>
<svg style="left:605px;top:992px" width="19" height="24" viewBox="0 0 19 24"><rect x="0" y="0" width="18.4" height="24" rx="1" fill="#7f93a2"/><rect x="2.4" y="2" width="13.8" height="4.6" fill="#35c5ec"/><rect x="2.2" y="8.4" width="3.9" height="3.9" fill="#e8e4ec"/><rect x="7.1000000000000005" y="8.4" width="3.9" height="3.9" fill="#e8e4ec"/><rect x="12.0" y="8.4" width="3.9" height="3.9" fill="#e8e4ec"/><rect x="2.2" y="13.3" width="3.9" height="3.9" fill="#e8e4ec"/><rect x="7.1000000000000005" y="13.3" width="3.9" height="3.9" fill="#e8e4ec"/><rect x="2.2" y="18.200000000000003" width="3.9" height="3.9" fill="#e8e4ec"/><rect x="7.1000000000000005" y="18.200000000000003" width="3.9" height="3.9" fill="#e8e4ec"/><rect x="12" y="13.3" width="3.9" height="8.8" fill="#1d4c8c"/></svg>
<svg style="left:650px;top:991px" width="24" height="26" viewBox="0 0 24 26"><path d="M2 1.2L21 2.6L20 17.4L1 15.4Z" fill="#d8dcf6" stroke="#9aa0d8" stroke-width="0.8"/><path d="M3.2 2.6L12 3.2L9 15L2.4 14.4Z" fill="#1414b4"/><path d="M12 3.2L19.6 3.8L18.8 16L9 15Z" fill="#8e98ea"/><path d="M8 17H14V20.4H8Z" fill="#c9cad0"/><ellipse cx="11.4" cy="22" rx="7.4" ry="2.6" fill="#dfe0e4"/><circle cx="17.8" cy="18.8" r="5.2" fill="#eef6e6" stroke="#b5c9a4" stroke-width="0.7"/><path d="M14.8 20.6L17.2 18.2M17.2 18.2V20M17.2 18.2H15.4M20.8 17L18.4 19.4M18.4 19.4V17.6M18.4 19.4H20.2" stroke="#3a9a2e" stroke-width="1.1" fill="none"/></svg>
<svg style="left:698px;top:993px" width="24" height="22" viewBox="0 0 24 22"><circle cx="7.5" cy="3.3" r="2.5" fill="#5ad45a"/><circle cx="16.3" cy="3.3" r="2.5" fill="#5ad45a"/><circle cx="2.8" cy="11.2" r="2.5" fill="#5ad45a"/><circle cx="20.8" cy="11.2" r="2.5" fill="#5ad45a"/><circle cx="16.3" cy="18.8" r="2.5" fill="#5ad45a"/><text x="11.9" y="14.6" text-anchor="middle" font-family="Liberation Sans, sans-serif" font-weight="bold" font-size="8.5" fill="#fff">IB</text></svg>
<svg style="left:746px;top:992px" width="25" height="24" viewBox="0 0 25 24"><rect x="0" y="0" width="24.2" height="24" rx="3.2" fill="#fdfdfd"/><path d="M2 17.4L9.6 8.4L9.2 12.4L15.4 6.8L14.6 10.4L22.8 4.6L15.8 15L16.2 11.8L10.2 17L10.6 13.6L6.4 17.8Z" fill="#f58a1e"/></svg>
<svg style="left:794px;top:992px" width="25" height="24" viewBox="0 0 25 24"><rect x="0" y="0" width="24.2" height="24" fill="#fdfdfd"/><path d="M3.2 4.4H7.6Q7.8 2.6 9.8 2.4Q11.8 2.6 12 4.4H16.2V21.6H3.2Z" fill="#2c7fd2"/><path d="M5.4 8.4H14M5.4 11.6H14M5.4 14.8H12M5.4 18H11" stroke="#9cc6ee" stroke-width="1.3"/><path d="M9.8 7V20" stroke="#5aa0e2" stroke-width="0.9"/><circle cx="18" cy="17.6" r="4.6" fill="#4a98e4" stroke="#fdfdfd" stroke-width="0.9"/><circle cx="18" cy="17.6" r="2" fill="#d7e9fa"/></svg>
<svg style="left:842px;top:992px" width="25" height="24" viewBox="0 0 25 24"><rect x="0" y="0" width="24.2" height="24" fill="#fdfdfd"/><path d="M12.2 2.8L16.799999999999997 5.199999999999999L12.2 7.6L7.6 5.199999999999999Z" fill="#b08cf6"/><path d="M7.6 6.0L11.799999999999999 8.299999999999999V13.0L7.6 10.6Z" fill="#8d5ff0"/><path d="M16.799999999999997 6.0L12.6 8.299999999999999V13.0L16.799999999999997 10.6Z" fill="#9a70f2"/><path d="M6.8 11.8L11.399999999999999 14.200000000000001L6.8 16.6L2.2 14.200000000000001Z" fill="#b08cf6"/><path d="M2.2 15.000000000000002L6.3999999999999995 17.3V22.0L2.2 19.6Z" fill="#8d5ff0"/><path d="M11.399999999999999 15.000000000000002L7.2 17.3V22.0L11.399999999999999 19.6Z" fill="#9a70f2"/><path d="M17.6 11.8L22.200000000000003 14.200000000000001L17.6 16.6L13.000000000000002 14.200000000000001Z" fill="#b08cf6"/><path d="M13.000000000000002 15.000000000000002L17.200000000000003 17.3V22.0L13.000000000000002 19.6Z" fill="#8d5ff0"/><path d="M22.200000000000003 15.000000000000002L18.0 17.3V22.0L22.200000000000003 19.6Z" fill="#9a70f2"/></svg>
<svg style="left:890px;top:992px" width="25" height="24" viewBox="0 0 25 24"><rect x="0" y="0" width="24.2" height="24" fill="#fdfdfd"/><g fill="#f58a2a"><path d="M4.9 6.6L8.3 11.6H6.4V21.4H3.4000000000000004V11.6H1.5000000000000004Z"/><path d="M12.2 4.3L15.6 9.3H13.7V21.4H10.7V9.3H8.799999999999999Z"/><path d="M19.5 2L22.9 7H21.0V21.4H18.0V7H16.1Z"/></g></svg>
<svg style="left:988px;top:996px" width="25" height="16" viewBox="0 0 25 16"><g fill="none" stroke="#fff" stroke-width="1.5"><path d="M3.5 3V1H24V13Q24 15 22 15H3.5"/><path d="M3.5 3.2H1V13Q1 15 2.8 15Q4.6 15 4.6 13V3.2"/><rect x="7.5" y="7" width="6" height="5"/><path d="M7 4H21M16 7.2H21M16 9.6H21M16 12H21"/></g></svg>
<svg style="left:1030.5px;top:1000px" width="13" height="8" viewBox="0 0 13 8"><path d="M0.8 7L6.5 1.2L12.2 7" fill="none" stroke="#fff" stroke-width="1.4"/></svg>
<svg style="left:1053px;top:997px" width="17" height="13" viewBox="0 0 17 13"><g fill="none" stroke="#fff" stroke-width="1.1"><path d="M2 0V3M5 0V3M0.5 3H6.5V5.5Q6.5 8 3.5 8Q0.5 8 0.5 5.5ZM3.5 8V12"/><path d="M8.5 4H16V10.5H6.5"/><path d="M9.5 5.5L13 9M13 5.5L9.5 9" stroke-width="1"/></g></svg>
<svg style="left:1077px;top:997px" width="15" height="13" viewBox="0 0 15 13"><g fill="none" stroke="#fff" stroke-width="1.1"><path d="M0.6 4.3H3L6.4 1V12L3 8.7H0.6Z"/><path d="M9 4.3L13.6 8.9M13.6 4.3L9 8.9"/></g></svg>
<svg style="left:1100px;top:996px" width="17" height="15" viewBox="0 0 17 15"><g fill="none" stroke="#fff" stroke-width="1.2"><path d="M3.5 2H16V10.5H3.5Z"/><path d="M9.7 10.5V13.5M6 13.7H13.5"/><rect x="0.6" y="0.6" width="4.6" height="4.6" fill="#1f3140"/><path d="M2.9 5.2V7.5"/></g></svg>
<div class="x" style="left:1129.5px;top:997.36px;font-size:10.5px;line-height:14px;color:#fff;letter-spacing:-1.072px;">ESP</div>
<div class="x" style="left:1168.75px;top:986.59px;font-size:12px;line-height:16px;color:#fff;letter-spacing:-0.587px;">17:24 Hrs</div>
<div class="x" style="left:1163.75px;top:1003.84px;font-size:12px;line-height:16px;color:#fff;letter-spacing:-0.192px;">11/03/2024</div>
<svg style="left:1239px;top:996px" width="16" height="16" viewBox="0 0 16 16"><path d="M0.7 0.7H15.3V11.3H10.5L8 14.2L5.5 11.3H0.7Z" fill="none" stroke="#fff" stroke-width="1.3"/></svg>
<div class="a" style="left:1275px;top:984px;width:1px;height:40px;background:#7f8a92;"></div>
</body>
</html>
